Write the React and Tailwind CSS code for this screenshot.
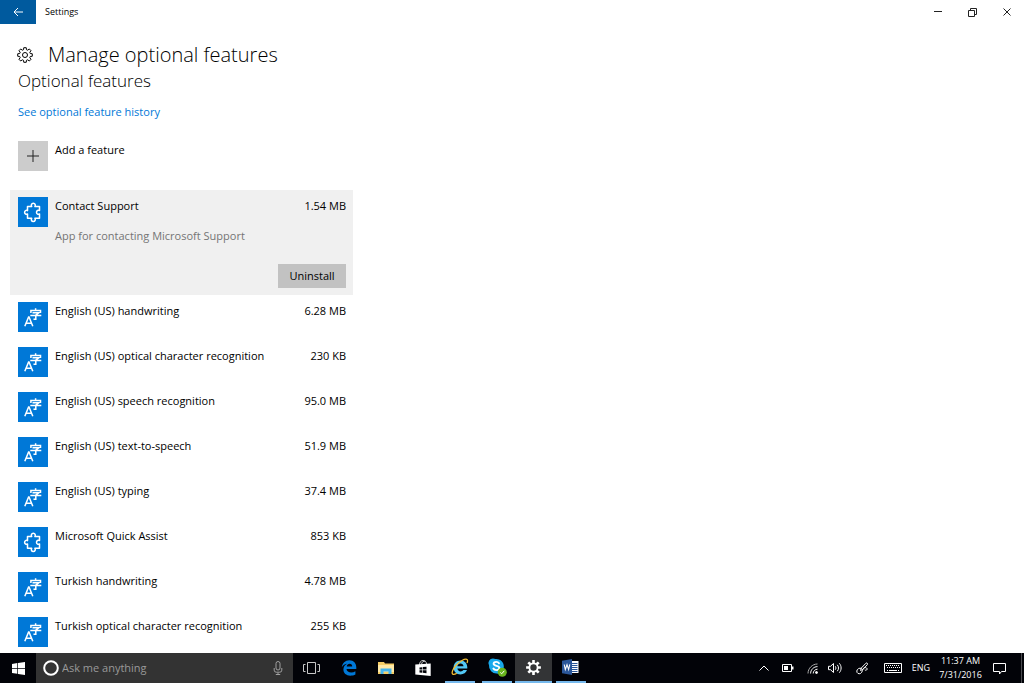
import { useState } from "react";

const FEATURES = [
  { name: "Contact Support", size: "1.54 MB", icon: "puzzle", description: "App for contacting Microsoft Support" },
  { name: "English (US) handwriting", size: "6.28 MB", icon: "language" },
  { name: "English (US) optical character recognition", size: "230 KB", icon: "language" },
  { name: "English (US) speech recognition", size: "95.0 MB", icon: "language" },
  { name: "English (US) text-to-speech", size: "51.9 MB", icon: "language" },
  { name: "English (US) typing", size: "37.4 MB", icon: "language" },
  { name: "Microsoft Quick Assist", size: "853 KB", icon: "puzzle" },
  { name: "Turkish handwriting", size: "4.78 MB", icon: "language" },
  { name: "Turkish optical character recognition", size: "255 KB", icon: "language" },
];

// points of a wheel with eight teeth, centred in a 16x16 box
function gearPoints(inner, outer) {
  const points = [];
  for (let i = 0; i < 8; i++) {
    const base = (i * Math.PI) / 4;
    [[-0.27, inner], [-0.17, outer], [0.17, outer], [0.27, inner]].forEach(([offset, r]) => {
      const a = base + offset;
      points.push(`${(8 + r * Math.cos(a)).toFixed(2)},${(8 + r * Math.sin(a)).toFixed(2)}`);
    });
  }
  return points.join(" ");
}

function PuzzleIcon() {
  return (
    <svg viewBox="0 0 30 30" className="size-[30px]" fill="none" stroke="white" strokeWidth="1.5" strokeLinejoin="round">
      <path d="M9.5 9.5h4.2c-.9-1.4-.2-3.2 1.6-3.2s2.5 1.8 1.6 3.2h4.600v4.1c-1.3-.8-3 0-3 1.7s1.7 2.5 3 1.7v4.3h-4.600c.9 1.4.2 3.2-1.6 3.2s-2.5-1.8-1.6-3.2H9.5v-4.3c-1.3.7-2.9-.1-2.9-1.7s1.6-2.4 2.9-1.7z" />
    </svg>
  );
}

function LanguageIcon() {
  return (
    <svg viewBox="0 0 30 30" className="size-[30px]" fill="none" stroke="white">
      <path strokeWidth="1.5" d="M6.8 24.3 10.6 15h.4l3.8 9.3M8.2 21.2h5.2" />
      <path strokeWidth="1.5" d="M17.6 6.3v2M12.900 11V8.500h9.600V11M14.500 10.800h6.300l-3 2.300v4.100h-2.300M12.300 13.500h11" />
    </svg>
  );
}

function FeatureRow({ feature, selected, onSelect }) {
  return (
    <li className={selected ? "bg-[#f0f0f0] h-[105px] py-[7px] pl-2 pr-[7px] flex flex-col" : "h-[45px] py-[7px] pl-2 pr-[7px]"}>
      <button type="button" onClick={onSelect} className="w-full flex items-start gap-[7px] text-left">
        <span className="size-[30px] shrink-0 bg-[#0078d7]">
          {feature.icon === "puzzle" ? <PuzzleIcon /> : <LanguageIcon />}
        </span>
        <span className="flex-1">{feature.name}</span>
        <span>{feature.size}</span>
      </button>
      {selected && (
        <>
          <p className="pl-[37px] text-[#757575]">{feature.description}</p>
          <button type="button" className="mt-auto self-end w-[68px] h-6 bg-[#c2c2c2]">
            Uninstall
          </button>
        </>
      )}
    </li>
  );
}

function TitleBar() {
  return (
    <header className="h-6 shrink-0 flex items-center">
      <button type="button" aria-label="Back" className="w-9 h-6 bg-[#005a9e] text-white flex items-center justify-center">
        <svg viewBox="0 0 10 10" className="size-[10px]" fill="none" stroke="currentColor">
          <path d="M10 5H1M5 1 1 5l4 4" />
        </svg>
      </button>
      <span className="flex-1 pl-[9px] text-[9px]">Settings</span>
      <button type="button" aria-label="Minimize" className="w-[34px] h-6 flex items-center justify-center">
        <svg viewBox="0 0 8 8" className="size-2" stroke="#222"><path d="M0 3.5h8" /></svg>
      </button>
      <button type="button" aria-label="Restore" className="w-[34px] h-6 flex items-center justify-center">
        <svg viewBox="0 0 9 9" className="size-[9px]" fill="none" stroke="#222">
          <path d="M.5 2.5h6v6h-6zM2.5 2.5v-2h6v6h-2" />
        </svg>
      </button>
      <button type="button" aria-label="Close" className="w-[35px] h-6 flex items-center justify-center">
        <svg viewBox="0 0 8 8" className="size-2" stroke="#222"><path d="m.5.5 7 7m0-7-7 7" /></svg>
      </button>
    </header>
  );
}

function TaskbarApp({ label, running, active, children }) {
  return (
    <button
      type="button"
      aria-label={label}
      className={`w-[37px] h-[30px] flex flex-col items-center ${active ? "bg-[#333436]" : ""}`}
    >
      <span className="flex-1 flex items-center">{children}</span>
      {running && <span className={`h-0.5 bg-[#76b9ed] ${active ? "w-full" : "w-[30px]"}`} />}
    </button>
  );
}

function TrayButton({ label, className, children }) {
  return (
    <button type="button" aria-label={label} className={`h-[30px] flex items-center justify-center ${className}`}>
      {children}
    </button>
  );
}

function Taskbar() {
  return (
    <footer className="h-[30px] shrink-0 flex items-center bg-[#020308] text-white">
      <button type="button" aria-label="Start" className="w-9 h-[30px] flex items-center justify-center">
        <svg viewBox="0 0 13 13" className="size-[13px]" fill="white">
          <path d="M0 1.9 5.3 1.1V6.1H0zM6 1 13 0v6.1H6zM0 6.8h5.3v5L0 11.1zM6 6.8h7V13l-7-1z" />
        </svg>
      </button>
      <label className="w-[257px] h-[30px] flex items-center bg-[#333333] pl-[7px] pr-[9px]">
        <svg viewBox="0 0 16 16" className="size-4 shrink-0" fill="none" stroke="white" strokeWidth="2">
          <circle cx="8" cy="8" r="6.8" />
        </svg>
        <input
          type="text"
          aria-label="Search"
          placeholder="Ask me anything"
          className="flex-1 min-w-0 pl-[3px] text-[11px] outline-none placeholder:text-[#999999]"
        />
        <svg viewBox="0 0 12 14" className="w-3 h-3.5 shrink-0" fill="none" stroke="#a0a0a0">
          <rect x="4" y=".5" width="4" height="8.5" rx="2" />
          <path d="M2.2 7v2.2a2 2 0 0 0 2 2h3.6a2 2 0 0 0 2-2V7M6 11.5v2M3.8 13.5h4.4" />
        </svg>
      </label>

      <TaskbarApp label="Task View">
        <svg viewBox="0 0 17 12" className="w-[17px] h-3" fill="none" stroke="#c8c8c8">
          <path d="M4.5.5h8v11h-8zM2.5 2.5h-2v7h2M14.5 2.5h2v7h-2" />
        </svg>
      </TaskbarApp>
      <TaskbarApp label="Microsoft Edge">
        <svg viewBox="0 0 16 16" className="size-4" fill="#0078d7">
          <path d="M.8 7.2C1.3 3.2 4.2.3 8.3.3c4.5 0 7 3.2 7 7.1v1.7H5.5c.1 2.4 2.3 3.4 4.7 3.4 1.6 0 3-.4 4.2-1.2v3.2c-1.4.8-3.1 1.2-5 1.2-4.3 0-7-2.5-7-6.1 0-2.6 1.4-4.7 3.8-5.8C4 4 2 5.3.8 7.2zM5.7 6.4h5.5c0-1.7-.9-2.7-2.5-2.7S6 4.7 5.7 6.4z" />
        </svg>
      </TaskbarApp>
      <TaskbarApp label="File Explorer">
        <svg viewBox="0 0 16 14" className="w-4 h-3.5">
          <path fill="#f5cd66" d="M0 1h6l1 1.5h9V13H0z" />
          <path fill="#ffe9a6" d="M0 4h16v7H0z" />
          <path fill="#45b5ee" d="M2.5 7.5h11V13h-3v-2.5h-5V13h-3z" />
        </svg>
      </TaskbarApp>
      <TaskbarApp label="Store">
        <svg viewBox="0 0 16 18" className="w-4 h-[18px]">
          <path d="M4.5 6c0-3 1.5-4.5 3.5-4.5S11.5 3 11.5 5M6.5 5.5c.3-2.500 2-3.800 3.800-3.300" fill="none" stroke="#ccc" />
          <path fill="white" d="M.3 5.5 15.7 4.500v12.500L.3 15.500z" />
          <path fill="#020308" d="m4.5 8.5 2.800-.3v2.400H4.500zM7.900 8.100l3.600-.4v2.900H7.900zM4.500 11.200h2.800v2.500l-2.800-.3zM7.900 11.200h3.600v3l-3.600-.4z" />
        </svg>
      </TaskbarApp>
      <TaskbarApp label="Internet Explorer" running>
        <svg viewBox="0 0 18 18" className="size-[18px]">
          <path fill="#53c8f5" d="M9.5 2.500c4.300 0 6.800 3 6.800 6.900v1.200H6.400c.2 1.900 1.500 2.800 3.200 2.800 1.300 0 2.200-.5 2.800-1.400h3.600c-.9 2.800-3.300 4.400-6.500 4.400-4.100 0-6.900-2.700-6.900-6.900s2.900-7 6.900-7zM6.400 8.200h6.100c-.2-1.700-1.300-2.600-3-2.600s-2.800.9-3.100 2.600z" />
          <path fill="none" stroke="#f4bd32" strokeWidth="1.3" d="M16 5c.8-2 .8-3.200-.2-3.600-2-.9-7.200 1.800-10.900 6.100-3.300 3.800-4.600 7.700-3.100 8.700.8.5 2.400 0 4-1" />
        </svg>
      </TaskbarApp>
      <TaskbarApp label="Skype" running>
        <svg viewBox="0 0 20 20" className="size-5">
          <path fill="#18a9ec" d="M6 1.500c1 0 1.700.2 2.400.6a7.500 7.500 0 0 1 8.200 9.300 4.500 4.500 0 0 1-6.500 5A7.500 7.500 0 0 1 2 8.200 4.500 4.500 0 0 1 6 1.500z" />
          <path fill="none" stroke="white" strokeWidth="1.9" strokeLinecap="round" d="M12 6.200c-.6-1-1.600-1.300-2.800-1.300-1.500 0-2.600.7-2.600 1.900 0 2.700 5.800 1.500 5.800 4.200 0 1.300-1.200 2.100-3 2.100-1.500 0-2.500-.5-3-1.600" />
          <circle cx="15.3" cy="15.3" r="4.5" fill="#68b41d" />
          <path fill="none" stroke="white" d="m13.300 15.500 1.400 1.300 2.600-3" />
        </svg>
      </TaskbarApp>
      <TaskbarApp label="Settings" running active>
        <svg viewBox="0 0 16 16" className="size-[15px]">
          <polygon points={gearPoints(5.4, 8)} fill="white" />
          <circle cx="8" cy="8" r="3.4" fill="#333436" />
        </svg>
      </TaskbarApp>
      <TaskbarApp label="Word" running>
        <svg viewBox="0 0 17 16" className="w-[17px] h-4">
          <path fill="white" d="M9 2h7.5v12H9z" />
          <path stroke="#2b579a" d="M10 4.500h5.500M10 6.500h5.500M10 8.500h5.500M10 10.500h5.500M10 12.500h5.500" />
          <path fill="#2b579a" d="M0 1.800 10 0v16L0 14.200z" />
          <path fill="none" stroke="white" strokeWidth="1.1" d="m2.200 5.500 1.100 5L5 5.700l1.600 4.800 1.200-5.200" />
        </svg>
      </TaskbarApp>

      <div className="flex-1" />

      <TrayButton label="Show hidden icons" className="w-6">
        <svg viewBox="0 0 10 6" className="w-[10px] h-1.5" fill="none" stroke="white"><path d="m.5 5.5 4.500-4.500 4.500 4.500" /></svg>
      </TrayButton>
      <TrayButton label="Battery" className="w-6">
        <svg viewBox="0 0 12 8" className="w-3 h-2">
          <path fill="none" stroke="white" d="M.5.5h9v7h-9z" />
          <path fill="white" d="M2 2h4v4H2zM9 2.500h2.500v3H9z" />
        </svg>
      </TrayButton>
      <TrayButton label="Network" className="w-6">
        <svg viewBox="0 0 11 11" className="size-[11px]" fill="none" stroke="white">
          <path d="M1 10.500C1 5.300 5.300 1 10.500 1" stroke="#aaa" />
          <path d="M3.600 10.500c0-3.800 3.100-6.900 6.900-6.900M6.200 10.500c0-2.400 1.900-4.300 4.300-4.300" />
          <circle cx="9.500" cy="9.500" r="1" fill="white" />
        </svg>
      </TrayButton>
      <TrayButton label="Volume" className="w-[22px]">
        <svg viewBox="0 0 14 12" className="w-3.5 h-3" fill="none" stroke="white">
          <path d="M.5 4.300h2L5.500 1.500v9l-3-2.800h-2zM7.300 4.300c.8 1 .8 2.400 0 3.400M9.300 2.800c1.600 1.800 1.600 4.600 0 6.400M11.300 1.300c2.400 2.600 2.400 6.800 0 9.400" />
        </svg>
      </TrayButton>
      <TrayButton label="Windows Ink Workspace" className="w-8">
        <svg viewBox="0 0 13 13" className="size-[13px]" fill="none" stroke="white">
          <path d="m4.500 8.500.8-2.500 4.700-4.800c.8-.8 2.200.6 1.400 1.400L6.800 7.500zM5.500 6.500C3.500 5.500 1 7 .8 9c-.2 2.200 2 3.300 3.700 2.500 2.300-1.200 1.700-5 3.700-5.800 1.600-.5 3.400.5 2.800 1.800-.4.900-1.600.9-2.200.4" />
        </svg>
      </TrayButton>
      <TrayButton label="Touch keyboard" className="w-[29px]">
        <svg viewBox="0 0 18 10" className="w-[18px] h-[10px]" fill="none" stroke="white">
          <path d="M.5.5h17v9H.5z" />
          <path strokeDasharray="1 1" d="M2 2.500h14M3 4.500h13" />
          <path d="M3 7.500h1M5 7.500h8M14 7.500h1" />
        </svg>
      </TrayButton>
      <TrayButton label="Language" className="w-7 text-[9px]">ENG</TrayButton>
      <TrayButton label="Date and time" className="w-[51px] flex-col text-[9px] leading-[14px]">
        <span>11:37 AM</span>
        <span>7/31/2016</span>
      </TrayButton>
      <TrayButton label="Action Center" className="w-[27px]">
        <svg viewBox="0 0 13 13" className="size-[13px]" fill="none" stroke="white">
          <path d="M.5 1.500h12v8h-4l-2 2.500v-2.500h-6z" />
        </svg>
      </TrayButton>
      <button type="button" aria-label="Show desktop" className="ml-2 w-[3px] h-[30px] border-l border-[#4a4a4f]" />
    </footer>
  );
}

export default function App() {
  const [selected, setSelected] = useState("Contact Support");

  return (
    <div className="h-screen flex flex-col bg-white text-black font-['Open_Sans','Noto_Sans',sans-serif] text-[11px] leading-[18px]">
      <TitleBar />
      <main className="flex-1 min-h-0 overflow-hidden pl-[10px]">
        <h1 className="pl-[7px] pt-[18px] flex items-center gap-[15px] text-[20px] leading-[26px] font-light">
          <svg viewBox="0 0 16 16" className="size-4" fill="none" stroke="currentColor" strokeLinejoin="round">
            <polygon points={gearPoints(5.5, 7.4)} />
            <circle cx="8" cy="8" r="2.5" />
          </svg>
          Manage optional features
        </h1>
        <h2 className="pl-2 text-[17px] leading-[26px] font-light">Optional features</h2>
        <a href="#history" className="block w-fit ml-2 mt-[9px] text-[#0078d7]">See optional feature history</a>
        <button type="button" className="ml-2 mt-5 flex items-start gap-[7px]">
          <span className="size-[30px] bg-[#cccccc] flex items-center justify-center">
            <svg viewBox="0 0 12 12" className="size-3" stroke="#222"><path d="M6 0v12M0 6h12" /></svg>
          </span>
          <span>Add a feature</span>
        </button>
        <ul className="mt-[19px] w-[343px] max-w-full">
          {FEATURES.map((feature) => (
            <FeatureRow
              key={feature.name}
              feature={feature}
              selected={feature.name === selected}
              onSelect={() => setSelected(feature.name)}
            />
          ))}
        </ul>
      </main>
      <Taskbar />
    </div>
  );
}
